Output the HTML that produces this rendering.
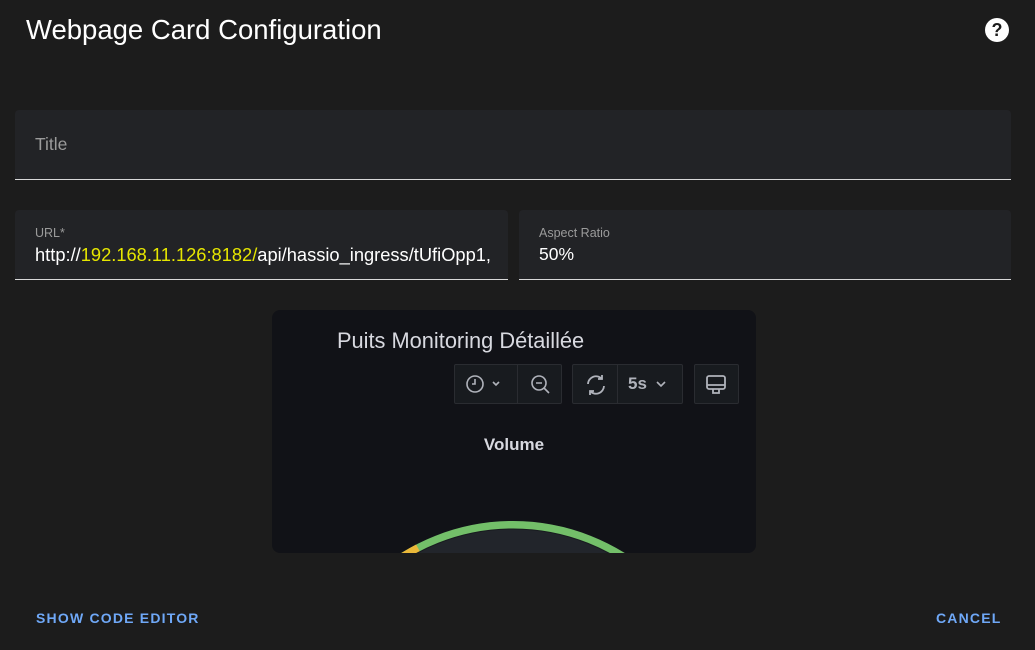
<!DOCTYPE html><html><head><style>
body{margin:0;width:1035px;height:650px;background:#1c1c1c;font-family:"Liberation Sans",sans-serif;position:relative;overflow:hidden;color:#e1e1e1}
.a{position:absolute}
.f{position:absolute;background:#222326;border-radius:4px 4px 0 0;border-bottom:1px solid #d8d8d8}
.btn{position:absolute;color:#6fa8f7;font-size:14px;font-weight:bold;letter-spacing:1.2px}
.tb{position:absolute;top:364px;height:38px;border:1px solid #2a2c31;background:#181b1f;border-radius:2px}
</style></head><body>
<div class="a" style="left:26px;top:14px;font-size:27.5px;color:#fff">Webpage Card Configuration</div>
<div class="a" style="left:985px;top:18px;width:24px;height:24px;border-radius:50%;background:#fff;color:#1c1c1c;font-weight:bold;font-size:18px;text-align:center;line-height:24px">?</div>
<div class="f" style="left:15px;top:110px;width:996px;height:69px"><div class="a" style="left:20px;top:24px;font-size:17.5px;color:#9b9b9b">Title</div></div>
<div class="f" style="left:15px;top:210px;width:493px;height:69px;overflow:hidden"><div class="a" style="left:20px;top:16px;font-size:12.5px;color:#9b9b9b">URL*</div><div class="a" style="left:20px;top:34px;font-size:18.3px;white-space:nowrap;color:#fff">http://<span style="color:#e6e600">192.168.11.126:8182/</span>api/hassio_ingress/tUfiOpp1,</div></div>
<div class="f" style="left:519px;top:210px;width:492px;height:69px"><div class="a" style="left:20px;top:16px;font-size:12.5px;color:#9b9b9b">Aspect Ratio</div><div class="a" style="left:20px;top:34px;font-size:17.5px;color:#fff">50%</div></div>
<div class="a" style="left:272px;top:310px;width:484px;height:243px;background:#111217;border-radius:8px;overflow:hidden">
<div class="a" style="left:65px;top:18px;font-size:21.8px;color:#d8d9e0">Puits Monitoring Détaillée</div>
<div class="tb" style="left:182px;top:54px;width:106px"><div class="a" style="left:62px;top:0;width:1px;height:38px;background:#2a2c31"></div>
<svg class="a" style="left:10px;top:9px" width="40" height="20" fill="none" stroke="#b0b3bb" stroke-width="1.6"><circle cx="10" cy="10" r="8"/><path d="M10 5v5h-3"/><path d="M28 8l3 3 3-3"/></svg>
<svg class="a" style="left:75px;top:9px" width="22" height="22" fill="none" stroke="#b0b3bb" stroke-width="1.6"><circle cx="9" cy="9" r="7"/><path d="M6 9h6M14 14l5 5"/></svg></div>
<div class="tb" style="left:300px;top:54px;width:109px"><div class="a" style="left:44px;top:0;width:1px;height:38px;background:#2a2c31"></div>
<svg class="a" style="left:12px;top:9px" width="22" height="22" fill="none" stroke="#b0b3bb" stroke-width="1.8"><path d="M3 10a8 8 0 0 1 14-5M19 12a8 8 0 0 1-14 5M17 1v4h-4M5 21v-4h4"/></svg>
<div class="a" style="left:55px;top:9px;font-size:17px;color:#b0b3bb;font-weight:bold">5s</div>
<svg class="a" style="left:82px;top:14px" width="12" height="10" fill="none" stroke="#b0b3bb" stroke-width="1.6"><path d="M2 3l4 4 4-4"/></svg></div>
<div class="tb" style="left:422px;top:54px;width:43px">
<svg class="a" style="left:10px;top:9px" width="22" height="22" fill="none" stroke="#b0b3bb" stroke-width="1.8"><rect x="2" y="2" width="18" height="13" rx="2"/><path d="M2 11h18M8 15v4h6v-4"/></svg></div>
<div class="a" style="left:0;width:484px;top:125px;text-align:center;font-size:17px;font-weight:bold;color:#d8d9e0">Volume</div>
<svg class="a" style="left:0;top:0" width="484" height="243"><circle cx="241" cy="422" r="211" fill="#22252b"/><circle cx="241" cy="422" r="207" fill="none" stroke="#73bf69" stroke-width="8"/><path d="M146 238 A207 207 0 0 0 110 262" stroke="#eab839" stroke-width="8" fill="none"/><circle cx="241" cy="422" r="203" fill="none" stroke="#181b1f" stroke-width="1"/></svg>
</div>
<div class="btn" style="left:36px;top:610px">SHOW CODE EDITOR</div>
<div class="btn" style="left:936px;top:610px">CANCEL</div>
</body></html>
